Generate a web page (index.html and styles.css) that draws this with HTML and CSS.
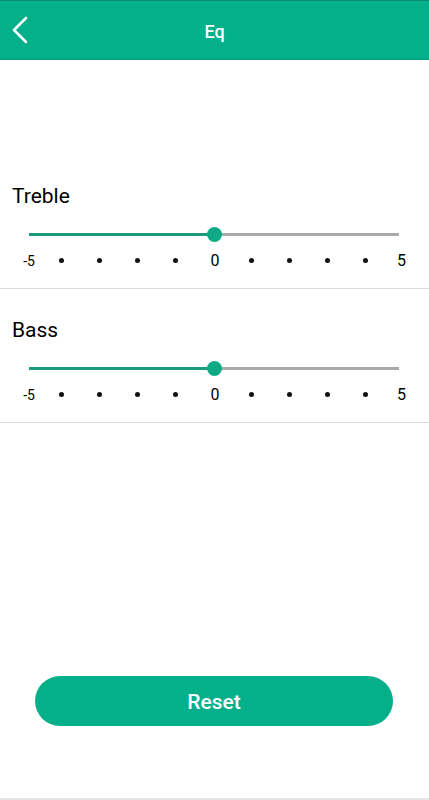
FILE: index.html
```html
<!DOCTYPE html>
<html lang="en">
<head>
    <meta charset="UTF-8">
    <meta name="viewport" content="width=device-width, initial-scale=1.0">
    <title>Eq</title>
    <link rel="stylesheet" href="styles.css">
</head>
<body>
    <div class="page">
        <header class="topbar">
            <button class="back" aria-label="Back">
                <svg width="20" height="30" viewBox="0 0 20 30">
                    <polyline points="15,3 3,15 15,27" fill="none" stroke="#fff" stroke-width="2.6" stroke-linecap="round" stroke-linejoin="round"/>
                </svg>
            </button>
            <h1 class="title">Eq</h1>
            <span></span>
        </header>

        <main class="content">
            <section class="band">
                <h2 class="band-name">Treble</h2>
                <div class="slider">
                    <div class="fill"></div>
                    <div class="thumb"></div>
                    <div class="rest"></div>
                </div>
                <div class="ticks">
                    <span class="tick min">-5</span>
                    <span class="tick"><i class="dot"></i></span>
                    <span class="tick"><i class="dot"></i></span>
                    <span class="tick"><i class="dot"></i></span>
                    <span class="tick"><i class="dot"></i></span>
                    <span class="tick mid">0</span>
                    <span class="tick"><i class="dot"></i></span>
                    <span class="tick"><i class="dot"></i></span>
                    <span class="tick"><i class="dot"></i></span>
                    <span class="tick"><i class="dot"></i></span>
                    <span class="tick max">5</span>
                </div>
            </section>

            <section class="band">
                <h2 class="band-name">Bass</h2>
                <div class="slider">
                    <div class="fill"></div>
                    <div class="thumb"></div>
                    <div class="rest"></div>
                </div>
                <div class="ticks">
                    <span class="tick min">-5</span>
                    <span class="tick"><i class="dot"></i></span>
                    <span class="tick"><i class="dot"></i></span>
                    <span class="tick"><i class="dot"></i></span>
                    <span class="tick"><i class="dot"></i></span>
                    <span class="tick mid">0</span>
                    <span class="tick"><i class="dot"></i></span>
                    <span class="tick"><i class="dot"></i></span>
                    <span class="tick"><i class="dot"></i></span>
                    <span class="tick"><i class="dot"></i></span>
                    <span class="tick max">5</span>
                </div>
            </section>
        </main>

        <div class="actions">
            <button class="reset">Reset</button>
        </div>
    </div>
</body>
</html>
```

FILE: styles.css
```css
body {
    margin: 0;
    padding: 0;
    font-family: Roboto, "Noto Sans", Arial, sans-serif;
    background-color: #fff;
    color: #000;
}

.page {
    height: 800px;
    box-sizing: border-box;
    display: flex;
    flex-direction: column;
    border-bottom: 2px solid #e6e6e6;
}

.topbar {
    height: 60px;
    box-sizing: border-box;
    display: grid;
    grid-template-columns: 48px 1fr 48px;
    align-items: center;
    background-color: #03b08a;
    border-top: 1px solid #0b8c6e;
    border-bottom: 1px solid #079a79;
}

.back {
    background: none;
    border: none;
    padding: 0 0 0 11px;
    height: 100%;
    display: flex;
    align-items: center;
    cursor: pointer;
}

.title {
    margin: 0;
    padding-top: 3px;
    text-align: center;
    color: #fff;
    font-size: 18px;
    font-weight: 500;
    line-height: 24px;
}

.content {
    padding-top: 95px;
}

.band {
    padding: 28px 0 16px;
    border-bottom: 1px solid #dcdcdc;
}

.band-name {
    margin: 0 0 0 12px;
    font-size: 21px;
    font-weight: 400;
    line-height: 26px;
    color: #000;
}

.slider {
    display: flex;
    align-items: center;
    height: 20px;
    margin: 15px 30px 0 29px;
}

.fill {
    flex: 1;
    height: 3px;
    background-color: #1b9b7d;
}

.rest {
    flex: 1;
    height: 3px;
    background-color: #a9a9a9;
}

.thumb {
    width: 15px;
    height: 15px;
    border-radius: 50%;
    background-color: #0eaa86;
    margin: 0 -7px;
    position: relative;
    z-index: 1;
}

.ticks {
    display: flex;
    margin: 6px 0 0 4px;
    height: 22px;
}

.tick {
    width: 38px;
    box-sizing: border-box;
    display: flex;
    align-items: center;
    justify-content: center;
    font-size: 16px;
    line-height: 22px;
    color: #000;
}

.tick.min {
    font-size: 14px;
    padding-left: 12px;
}

.tick.mid {
    padding-left: 4px;
}

.tick.max {
    padding-right: 3px;
}

.dot {
    display: block;
    width: 5px;
    height: 5px;
    border-radius: 50%;
    background-color: #111;
    margin-top: -1px;
}

.actions {
    margin-top: auto;
    padding: 0 36px 72px 35px;
}

.reset {
    width: 100%;
    height: 50px;
    padding-top: 2px;
    border: none;
    border-radius: 25px;
    background-color: #03b08a;
    color: #fff;
    font-family: Roboto, "Noto Sans", Arial, sans-serif;
    font-size: 21px;
    font-weight: 500;
    cursor: pointer;
}
```
